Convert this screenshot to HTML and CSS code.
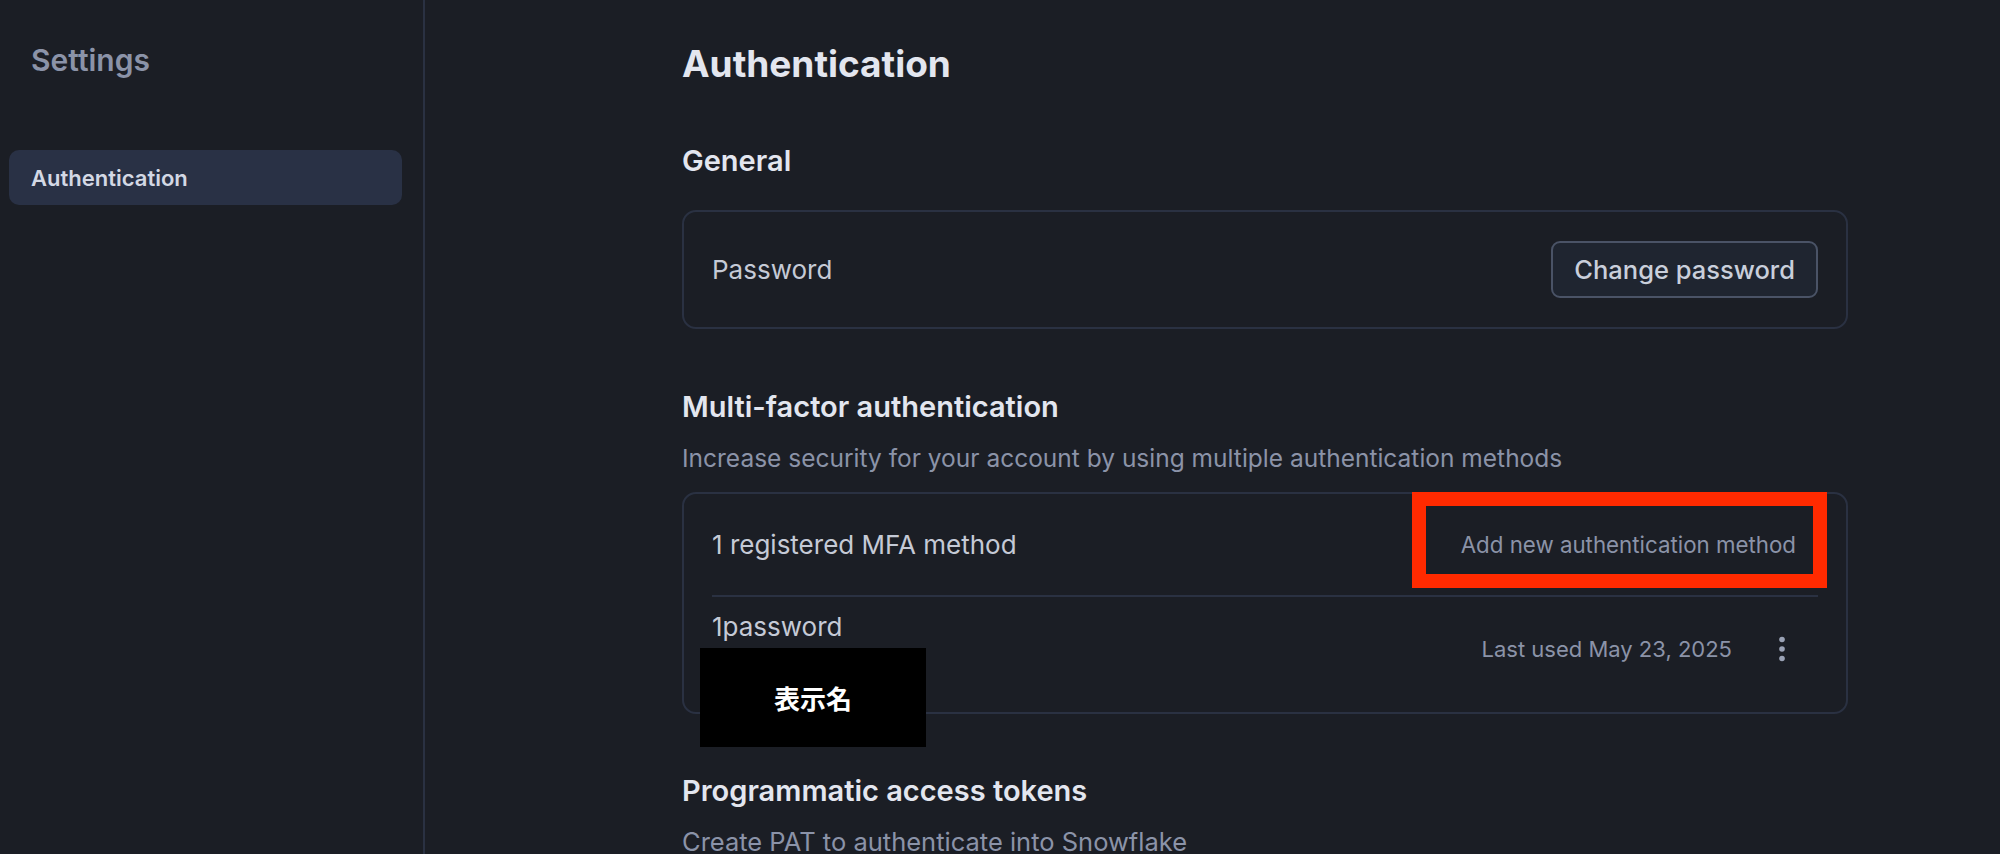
FILE: index.html
```html
<!DOCTYPE html>
<html lang="en">
<head>
<meta charset="utf-8">
<title>Settings - Authentication</title>
<link rel="stylesheet" href="styles.css">
</head>
<body>
<div class="app">
  <aside class="sidebar">
    <div class="sidebar-title">Settings</div>
    <nav class="nav">
      <a class="nav-item active">Authentication</a>
    </nav>
  </aside>
  <main class="main">
    <div class="content">
      <h1 class="page-title">Authentication</h1>

      <section class="section first">
        <h2 class="section-title">General</h2>
        <div class="card">
          <div class="card-row password-row">
            <span class="row-label">Password</span>
            <button class="btn">Change password</button>
          </div>
        </div>
      </section>

      <section class="section">
        <h2 class="section-title">Multi-factor authentication</h2>
        <p class="section-desc">Increase security for your account by using multiple authentication methods</p>
        <div class="card mfa-card">
          <div class="mfa-head">
            <span class="row-label">1 registered MFA method</span>
            <button class="link-btn">Add new authentication method</button>
          </div>
          <div class="mfa-item">
            <div class="mfa-info">
              <div class="mfa-name">1password</div>
              <div class="mfa-sub"></div>
            </div>
            <div class="mfa-meta">
              <span class="last-used">Last used May 23, 2025</span>
              <button class="kebab" aria-label="More">
                <svg width="12" height="28" viewBox="0 0 12 28"><circle cx="6" cy="4.5" r="2.8"/><circle cx="6" cy="14" r="2.8"/><circle cx="6" cy="23.5" r="2.8"/></svg>
              </button>
            </div>
          </div>
          <div class="annot-box"></div>
          <div class="redact">表示名</div>
        </div>
      </section>

      <section class="section last">
        <h2 class="section-title">Programmatic access tokens</h2>
        <p class="section-desc wide">Create PAT to authenticate into Snowflake</p>
      </section>
    </div>
  </main>
</div>
</body>
</html>
```

FILE: styles.css
```css
* { box-sizing: border-box; }
html, body { margin: 0; padding: 0; }
body {
  background: #1b1e25;
  font-family: Inter, "Noto Sans", "Noto Sans CJK JP", sans-serif;
  color: #c5cad6;
  height: 854px;
  overflow: hidden;
}
.app {
  display: flex;
  height: 854px;
}
.sidebar {
  width: 425px;
  flex: 0 0 425px;
  border-right: 2px solid #2a3142;
  padding: 42px 21px 0 9px;
}
.sidebar-title {
  font-size: 30px;
  line-height: 36px;
  font-weight: 600;
  color: #8b93a8;
  padding-left: 22px;
}
.nav { margin-top: 72px; }
.nav-item {
  display: flex;
  align-items: center;
  height: 55px;
  padding: 0 22px;
  border-radius: 10px;
  font-size: 22px;
  font-weight: 600;
  color: #d3d8e4;
}
.nav-item.active { background: #293145; }

.main {
  flex: 1;
  overflow: hidden;
  padding: 42px 0 0 257px;
}
.content { width: 1166px; }
.page-title {
  margin: 0;
  font-size: 37px;
  line-height: 44px;
  font-weight: 700;
  color: #e3e6ef;
}
.section { margin-top: 61px; }
.section.first { margin-top: 58px; }
.section.last { margin-top: 60px; }
.section-title {
  margin: 0;
  font-size: 29px;
  line-height: 34px;
  font-weight: 600;
  color: #e3e6ef;
}
.section-desc {
  margin: 18px 0 0;
  font-size: 24.5px;
  line-height: 32px;
  color: #8b93a8;
}
.section-desc.wide { font-size: 25.5px; }
.card {
  margin-top: 32px;
  border: 2px solid #2a3142;
  border-radius: 14px;
  position: relative;
}
.section-desc + .card { margin-top: 18px; }
.card-row {
  display: flex;
  align-items: center;
  justify-content: space-between;
  padding: 28px 28px;
  min-height: 115px;
}
.row-label {
  font-size: 26px;
  line-height: 32px;
  color: #c5cad6;
}
.btn {
  font-family: inherit;
  font-size: 25.5px;
  line-height: 32px;
  font-weight: 500;
  color: #c9cfdb;
  background: #1f2530;
  border: 2px solid #4a5366;
  border-radius: 9px;
  height: 57px;
  padding: 0 21px;
}
.mfa-card { padding: 0 28px; }
.mfa-head {
  display: flex;
  align-items: center;
  justify-content: space-between;
  height: 103px;
  border-bottom: 2px solid #2a3142;
}
.link-btn {
  font-family: inherit;
  font-size: 22.3px;
  line-height: 30px;
  color: #8b93a8;
  background: transparent;
  border: 0;
  padding: 0 22px;
}
.mfa-item {
  display: flex;
  align-items: center;
  justify-content: space-between;
  padding: 14px 0 25px;
}
.mfa-name {
  font-size: 26px;
  line-height: 32px;
  color: #c5cad6;
}
.mfa-sub { height: 32px; margin-top: 12px; }
.mfa-meta {
  display: flex;
  align-items: center;
  gap: 38px;
  margin-right: 24px;
}
.last-used {
  font-size: 22px;
  line-height: 30px;
  color: #8b93a8;
}
.kebab {
  width: 24px;
  height: 32px;
  padding: 0;
  border: 0;
  background: transparent;
  display: flex;
  align-items: center;
  justify-content: center;
}
.kebab svg { fill: #9aa2b5; }
.annot-box {
  position: absolute;
  left: 728px;
  top: -2px;
  width: 415px;
  height: 96px;
  border: 14px solid #ff2a00;
}
.redact {
  position: absolute;
  left: 16px;
  top: 154px;
  width: 226px;
  height: 99px;
  background: #000;
  color: #fff;
  font-family: "Noto Sans CJK JP", sans-serif;
  font-size: 26px;
  font-weight: 700;
  display: flex;
  align-items: center;
  justify-content: center;
}
```
